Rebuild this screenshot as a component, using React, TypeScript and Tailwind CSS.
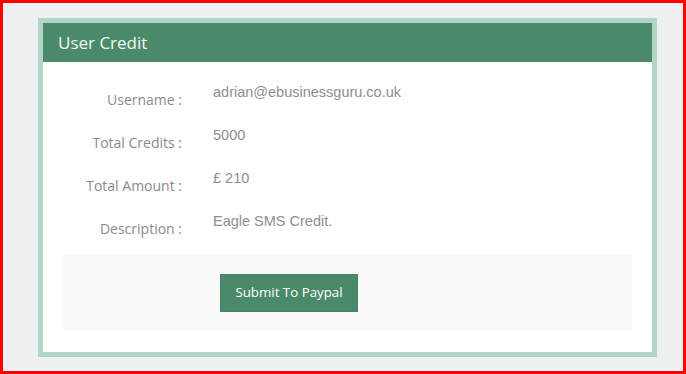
import React from "react";

const rows = [
  { label: "Username :", value: "adrian@ebusinessguru.co.uk" },
  { label: "Total Credits :", value: "5000" },
  { label: "Total Amount :", value: "£ 210" },
  { label: "Description :", value: "Eagle SMS Credit." },
];

export default function App() {
  return (
    <div className="w-[686px] h-[374px] border-[3px] border-[#ff0000] bg-[#eff0f4] pl-[35px] pt-[15px] font-['Open_Sans',sans-serif]">
      <div className="w-[619px] h-[339px] border-[5px] border-[#b1d6c5] bg-white">
        <div className="h-[39px] bg-[#4a8a6b] pl-[15px] flex items-center text-[17px] text-[#f4f8f2]">
          User Credit
        </div>
        <div className="px-[20px] pt-[20px]">
          {rows.map((r) => (
            <div key={r.label} className="flex h-[43px] text-[14px] leading-[20px]">
              <div className="w-[119px] text-right pt-[8px] text-[#8a8a8a]">{r.label}</div>
              <div className="ml-[31px] text-[14.5px] text-[#8e8e8e] font-['Liberation_Sans',sans-serif]">{r.value}</div>
            </div>
          ))}
          <div className="h-[77px] bg-[#f9f9f9] pt-[20px] pl-[157px]">
            <button
              type="button"
              className="h-[38px] w-[138px] bg-[#4a8a6b] border border-[#45836a] text-white text-[13.3px] font-['Open_Sans',sans-serif]"
            >
              Submit To Paypal
            </button>
          </div>
        </div>
      </div>
    </div>
  );
}
